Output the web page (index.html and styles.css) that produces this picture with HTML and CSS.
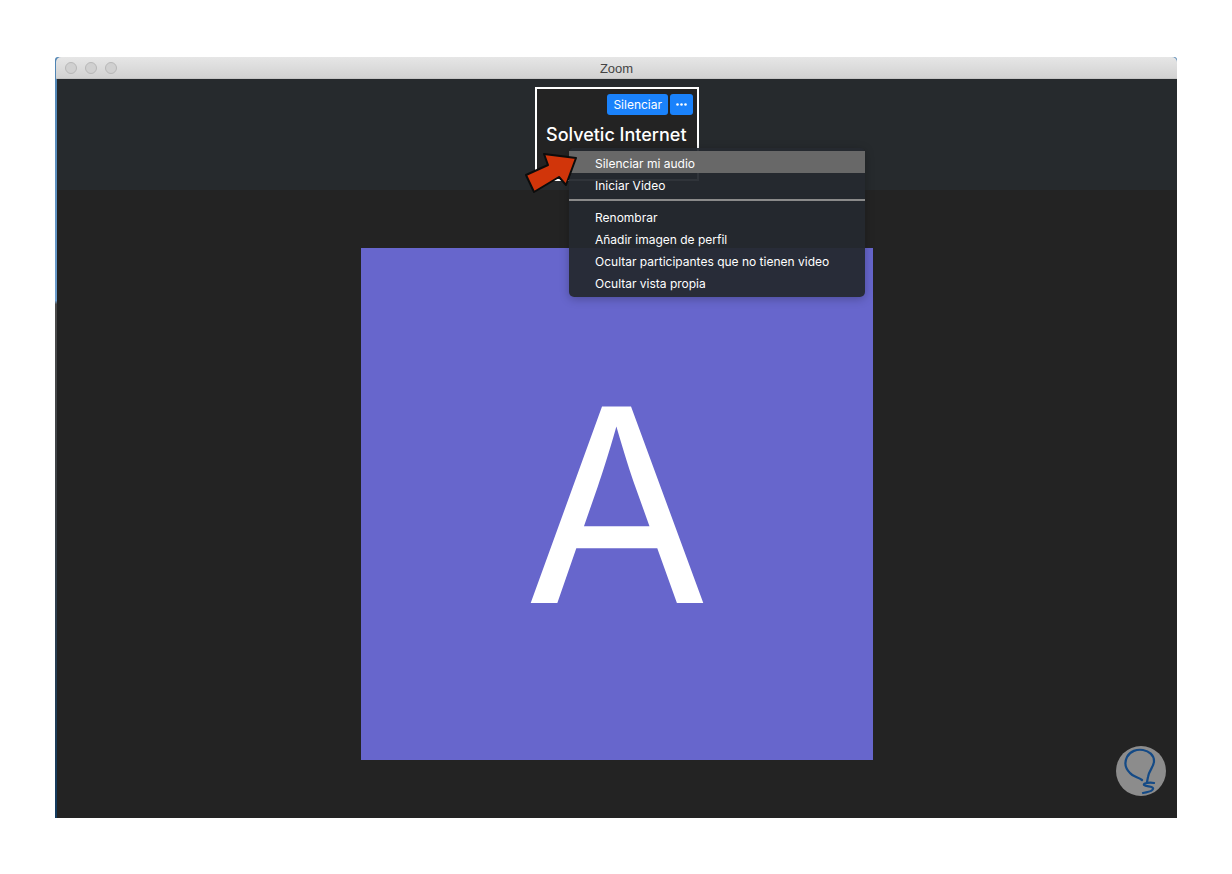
FILE: index.html
```html
<!DOCTYPE html>
<html lang="es">
<head>
<meta charset="utf-8">
<title>Zoom</title>
<link rel="stylesheet" href="styles.css">
</head>
<body>
<div class="window">
  <header class="titlebar">
    <div class="lights"><span class="light"></span><span class="light"></span><span class="light"></span></div>
    <div class="title">Zoom</div>
  </header>
  <div class="content">
    <section class="strip">
      <div class="thumb">
        <div class="thumb-actions">
          <span class="btn">Silenciar</span>
          <span class="btn btn-more"><svg width="11" height="3" viewBox="0 0 11 3"><circle cx="1.5" cy="1.5" r="1.3" fill="#fff"/><circle cx="5.5" cy="1.5" r="1.3" fill="#fff"/><circle cx="9.5" cy="1.5" r="1.3" fill="#fff"/></svg></span>
        </div>
        <div class="thumb-name">Solvetic Internet</div>
      </div>
    </section>
    <main class="stage">
      <div class="tile">A</div>
    </main>
    <nav class="menu">
      <div class="item item-active">Silenciar mi audio</div>
      <div class="item">Iniciar Video</div>
      <div class="sep"></div>
      <div class="item">Renombrar</div>
      <div class="item">Añadir imagen de perfil</div>
      <div class="item">Ocultar participantes que no tienen video</div>
      <div class="item">Ocultar vista propia</div>
    </nav>
    <svg class="arrow" width="58" height="46" viewBox="0 0 58 46"><path d="M2 25 L24 15 L20 4 L52 8 L42 35 L35 27 L10 42 Z" fill="#d1350a" stroke="#0c0c0c" stroke-width="2" stroke-linejoin="round"/></svg>
    <div class="badge"><svg width="50" height="50" viewBox="0 0 50 50"><path d="M26 34 C22 31 17 31 14 27 C10 23 8 17 11 11 C14 5 21 3 27 4 C33 5 38 9 38 15 C38 21 33 24 32 31 L31 36 M38 37 C34 36 27 37 28 39 C30 41 38 40 37 43 C36 46 30 46 27 47" fill="none" stroke="#144a86" stroke-width="2.2" stroke-linecap="round"/></svg></div>
  </div>
</div>
</body>
</html>
```
FILE: styles.css
```css
* { box-sizing: border-box; }
html, body { margin: 0; padding: 0; background: #fff; }
body { width: 1232px; height: 874px; padding: 57px 55px 0; font-family: "Inter", "Liberation Sans", sans-serif; overflow: hidden; }
.window { width: 1122px; height: 761px; display: flex; flex-direction: column; padding-left: 2px; background: linear-gradient(#4f84b3 0, #6a9bcb 32%, #4a4a4a 32.5%, #3a3f44 60%, #123a5e 100%); border-radius: 3px 3px 0 0; overflow: hidden; }
.titlebar { position: relative; height: 22px; flex: none; margin-left: -1px; background: linear-gradient(#e6e6e6, #d2d2d2); border-bottom: 1px solid #c4c4c4; border-radius: 5px 5px 0 0; }
.lights { display: flex; gap: 8px; padding: 5px 0 0 9px; }
.light { width: 12px; height: 12px; border-radius: 50%; background: #d0d0d0; border: 1px solid #b8b8b8; }
.title { position: absolute; left: 0; right: 0; top: 4px; text-align: center; font-size: 13px; line-height: 16px; color: #444; font-family: "Liberation Sans", sans-serif; }
.content { position: relative; flex: 1; display: flex; flex-direction: column; background: #232323; }
.strip { height: 111px; flex: none; background: #262a2d; display: flex; justify-content: center; padding-top: 8px; }
.thumb { width: 164px; height: 94px; background: #232323; border: 2px solid #fff; padding: 5px 4px 0 9px; }
.thumb-actions { display: flex; justify-content: flex-end; gap: 2px; }
.btn { height: 21px; padding: 1px 6px 0; border-radius: 3px; background: #1a82fb; color: #fff; font-size: 12px; line-height: 20px; display: flex; align-items: center; }
.btn-more { width: 23px; justify-content: center; padding: 0; }
.thumb-name { color: #fff; font-size: 18px; font-weight: 500; line-height: 24px; margin-top: 8px; white-space: nowrap; }
.stage { flex: 1; display: flex; justify-content: center; padding-top: 58px; }
.tile { width: 512px; height: 512px; background: #6766cc; color: #fff; font-size: 270px; font-weight: 400; line-height: 514px; text-align: center; overflow: hidden; }
.menu { position: absolute; left: 512px; top: 69px; width: 296px; height: 149px; padding: 3px 0; border-radius: 5px; background: rgba(37, 41, 47, 0.95); box-shadow: 0 2px 10px rgba(0, 0, 0, 0.25); color: #fff; font-size: 12px; }
.item { height: 22px; line-height: 22px; padding: 2px 0 0 26px; white-space: nowrap; }
.item-active { background: #686868; }
.sep { height: 2px; margin: 4px 0 4px; background: #8a8a8a; }
.arrow { position: absolute; left: 467px; top: 71px; }
.badge { position: absolute; left: 1059px; top: 667px; width: 50px; height: 50px; border-radius: 50%; background: #8c8c8c; }
```
